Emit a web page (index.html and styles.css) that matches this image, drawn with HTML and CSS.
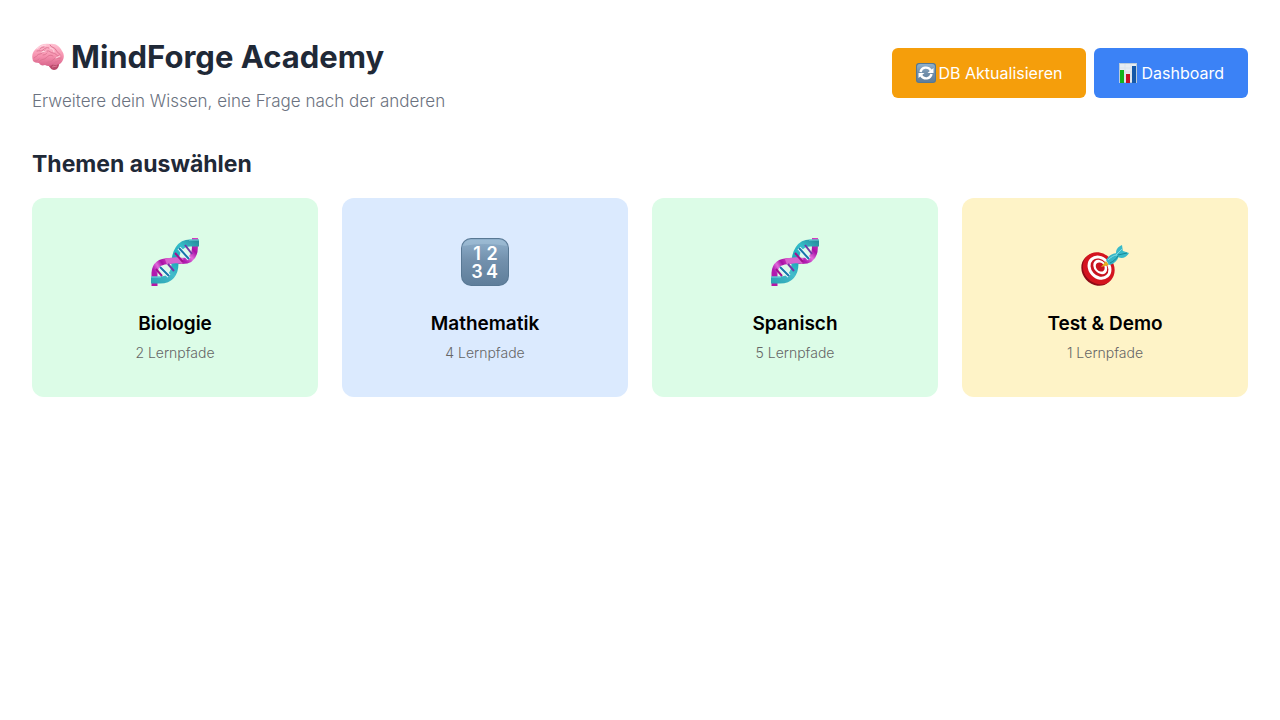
FILE: index.html
```html
<!DOCTYPE html>
<html lang="de">
<head>
<meta charset="utf-8">
<meta name="viewport" content="width=device-width, initial-scale=1">
<title>MindForge Academy</title>
<link rel="stylesheet" href="styles.css">
</head>
<body>
<svg class="defs" width="0" height="0" aria-hidden="true">
  <defs>
    <linearGradient id="teal" x1="0" y1="1" x2="1" y2="0"><stop offset="0" stop-color="#2da5b5"/><stop offset=".3" stop-color="#45bccb"/><stop offset=".52" stop-color="#16a9b8"/><stop offset=".78" stop-color="#36bdc9"/><stop offset="1" stop-color="#278f9e"/></linearGradient>
    <linearGradient id="pink" x1="0" y1="1" x2="1" y2="0"><stop offset="0" stop-color="#b716a5"/><stop offset=".3" stop-color="#b01bb0"/><stop offset=".5" stop-color="#e06ada"/><stop offset=".7" stop-color="#a812a6"/><stop offset="1" stop-color="#d93cc0"/></linearGradient>
    <linearGradient id="key" x1="0" y1="0" x2="0" y2="1"><stop offset="0" stop-color="#8fb0cc"/><stop offset=".45" stop-color="#7391ad"/><stop offset="1" stop-color="#5f7e9b"/></linearGradient>
    <linearGradient id="brain" x1="0" y1="0" x2="0" y2="1"><stop offset="0" stop-color="#ffc3d3"/><stop offset=".55" stop-color="#f691ae"/><stop offset="1" stop-color="#d9648c"/></linearGradient>
    <symbol id="dna" viewBox="0 0 48 48">
      <g fill="none">
        <path d="M3.500 48V35C4 26 10 23 19 23" stroke="url(#pink)" stroke-width="6"/>
        <path d="M44 0v8c0 10-4 15-13 15H18" stroke="url(#pink)" stroke-width="6"/>
        <path d="M0 42h9c10 0 15-6 15-17S29 5 39 5h9" stroke="url(#teal)" stroke-width="7"/>
        <path d="M15 24q8-3 17-1" stroke="#d763ce" stroke-width="6"/>
        <path d="M5 31l6 7M24 15l8 9" stroke="#a3108f" stroke-width="2"/>
        <path d="M9 29l9 9M28 10l10 11" stroke="#eaf7ff" stroke-width="4"/>
        <path d="M9 29l9 9M28 10l10 11" stroke="#1777a8" stroke-width="2"/>
        <path d="M17 26l6 7M34 7l7 9" stroke="#7437a8" stroke-width="2"/>
        <path d="M0 39h10M38 2h10" stroke="#79d5df" stroke-width="1"/>
      </g>
    </symbol>
  </defs>
</svg>
<main class="page">
  <header class="header">
    <div class="brand">
      <h1 class="title">
        <svg class="icon-brain" viewBox="0 0 32 28" aria-hidden="true">
          <path d="M19 20l8-2c1 4-1 9-5 9-3 0-4-3-6-5z" fill="#b94a6b"/>
          <path d="M1 18C-1 12 1 8 5 5c3-4 8-5 13-4 6-1 10 3 12 7 3 4 2 9-1 12-2 2-5 2-7 1-3 2-6 3-9 1-3 1-5 0-6-2-3 0-5-1-6-2z" fill="url(#brain)"/>
          <g fill="none" stroke="#de7694" stroke-width="1" stroke-linecap="round">
            <path d="M2 15c3-1 3-4 6-4s3-3 5-4M5 8c3-1 4 1 6-1s4-3 6-2M12 4c-2 0-3 1-4 2M18 2c1 3 5 2 6 5s4 3 5 6M15 8c3-1 3 2 6 2s3 3 6 3M7 19c1-3 5-2 7-4s4-4 7-2M13 21c2-3 6-1 8-4s5-1 8-2M3 18c2 0 3-1 4-2M22 20c1-2 4-1 6-3M11 12c2 0 3-1 4-2"/>
          </g>
          <path d="M5 6c3-3 6-4 9-4M18 5c3 0 4 2 4 4M10 9l3-1M24 15l4-2" fill="none" stroke="#ffdbe4" stroke-width="1" stroke-linecap="round"/>
          <path d="M21 22l4-1M20 24l5-1" stroke="#dc7895"/>
        </svg>
        <span>MindForge Academy</span>
      </h1>
      <p class="tagline">Erweitere dein Wissen, eine Frage nach der anderen</p>
    </div>
    <div class="actions">
      <button type="button" class="btn btn-refresh">
        <svg class="icon-btn" viewBox="0 0 20 20" aria-hidden="true">
          <rect width="20" height="20" rx="3" fill="#547894"/><rect x="1" y="1" width="18" height="18" rx="3" fill="url(#key)"/>
          <path d="M4.500 9C5.500 4 12 3 15 7.500M15.500 11C14.500 16 8 17 5 12.500" fill="none" stroke="#fff" stroke-width="2.400"/>
          <path d="M17.500 5v5h-6zM2.500 15v-5h6z" fill="#fff"/>
        </svg>
        <span>DB Aktualisieren</span>
      </button>
      <button type="button" class="btn btn-dashboard">
        <svg class="icon-btn" viewBox="0 0 20 20" aria-hidden="true">
          <path d="M1 0h18v20H1z" fill="#b9cbdc"/><path d="M2 1h16v18H2z" fill="#e6edf3"/>
          <path d="M2 5h16M2 9h16M2 13h16M7 1v18M13 1v18" stroke="#dbe3ec"/>
          <path d="M2 7h4v13H2z" fill="#12b51c"/><path d="M8 11h4v9H8z" fill="#c51226"/><path d="M14 3h4v17h-4z" fill="#1558a8"/>
        </svg>
        <span>Dashboard</span>
      </button>
    </div>
  </header>
  <section>
    <h2 class="section-title">Themen auswählen</h2>
    <div class="topics">
      <article class="card card-green">
        <svg class="icon-topic" aria-hidden="true"><use href="#dna"/></svg>
        <h3 class="card-title">Biologie</h3>
        <p class="card-meta">2 Lernpfade</p>
      </article>
      <article class="card card-blue">
        <svg class="icon-topic" viewBox="0 0 48 48" aria-hidden="true">
          <rect width="48" height="48" rx="10" fill="#587894"/>
          <rect x="1" y="1" width="46" height="46" rx="9" fill="url(#key)"/>
          <path d="M8 2h32q5 1 6 6Q24 4 2 8q1-5 6-6z" fill="#a8c5dc" opacity=".5"/>
          <g class="digits"><text x="16" y="22">1</text><text x="31" y="22">2</text><text x="16" y="40">3</text><text x="31" y="40">4</text></g>
        </svg>
        <h3 class="card-title">Mathematik</h3>
        <p class="card-meta">4 Lernpfade</p>
      </article>
      <article class="card card-green">
        <svg class="icon-topic" aria-hidden="true"><use href="#dna"/></svg>
        <h3 class="card-title">Spanisch</h3>
        <p class="card-meta">5 Lernpfade</p>
      </article>
      <article class="card card-yellow">
        <svg class="icon-topic" viewBox="0 0 48 48" aria-hidden="true">
          <g transform="rotate(48 17 31)">
            <ellipse cx="17" cy="32" rx="17" ry="15" fill="#8e0b17"/>
            <ellipse cx="17" cy="30" rx="17" ry="15" fill="#d4141f"/>
            <ellipse cx="17" cy="29" rx="13" ry="11" fill="#fff"/>
            <ellipse cx="17" cy="29" rx="10" ry="8" fill="#c8141f"/>
            <ellipse cx="17" cy="28" rx="8" ry="6" fill="#fff"/>
            <ellipse cx="17" cy="28" rx="5" ry="4" fill="#c8141f"/>
          </g>
          <path d="M20 29l5-6 3 4z" fill="#e5ad20"/>
          <path d="M25 22c3-5 7-7 12-7l1 3c-2 5-5 8-10 9z" fill="#35b5c5"/>
          <path d="M35 15c0-4 2-6 6-8l1 7zM35 15l7-2 6 2c-3 5-7 6-11 4z" fill="#39bac9"/>
          <path d="M35 17l6-6M27 22c3-3 6-5 9-5" stroke="#82dce4" fill="none"/>
          <path d="M37 17l9-2M29 25c4-2 6-4 8-7" stroke="#178797" fill="none"/>
        </svg>
        <h3 class="card-title">Test &amp; Demo</h3>
        <p class="card-meta">1 Lernpfade</p>
      </article>
    </div>
  </section>
</main>
</body>
</html>
```
FILE: styles.css
```css
* { box-sizing: border-box; }
body { margin: 0; background: #fff; color: #000; font-family: Inter, "Liberation Sans", sans-serif; }
h1, h2, h3, p { margin: 0; }
.defs { position: absolute; }
.page { padding: 32px; }
.header { display: flex; justify-content: space-between; align-items: center; gap: 24px; margin-bottom: 32px; }
.title { display: flex; align-items: center; gap: 7px; font-size: 31px; line-height: 50px; font-weight: 650; color: #1f2937; }
.icon-brain { width: 32px; height: 28px; }
.tagline { margin-top: 6px; font-size: 17px; line-height: 26px; font-weight: 350; color: #6b7280; }
.actions { display: flex; gap: 8px; }
.btn { display: flex; align-items: center; gap: 3px; height: 50px; padding: 0 24px; border: 0; border-radius: 6px; color: #fff; font-family: inherit; font-size: 16px; font-weight: 400; cursor: pointer; }
.btn-refresh { background: #f59e0b; }
.btn-dashboard { background: #3b82f6; }
.icon-btn { width: 20px; height: 20px; }
.section-title { margin-bottom: 15px; font-size: 23px; line-height: 37px; font-weight: 650; color: #1f2937; }
.topics { display: grid; grid-template-columns: repeat(auto-fit, minmax(250px, 1fr)); gap: 24px; }
.card { display: flex; flex-direction: column; align-items: center; padding: 40px 32px 33px; border-radius: 12px; text-align: center; }
.card-green { background: #dcfce7; }
.card-blue { background: #dbeafe; }
.card-yellow { background: #fef3c7; }
.icon-topic { width: 48px; height: 48px; margin-bottom: 22px; }
.digits { fill: #fff; font-size: 18px; font-weight: 600; text-anchor: middle; }
.card-title { margin-bottom: 2px; font-size: 19px; line-height: 32px; font-weight: 600; }
.card-meta { font-size: 14px; line-height: 22px; font-weight: 350; color: #666; }
```
